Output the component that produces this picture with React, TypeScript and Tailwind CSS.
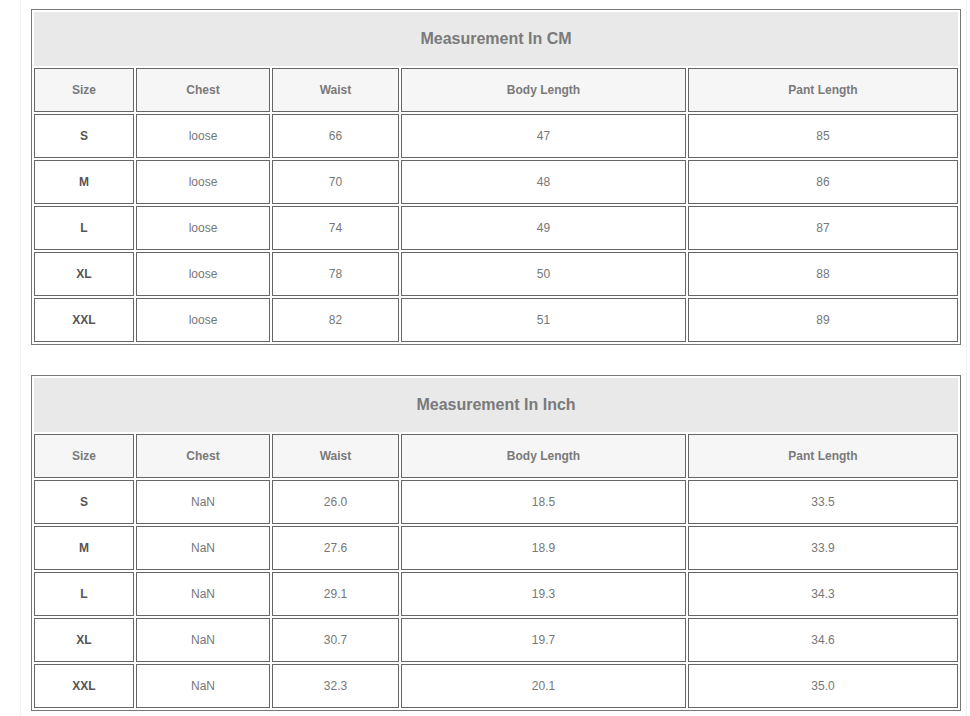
import React from 'react';

// Size chart tables (CM / Inch)

type Row = { size: string; chest: string; waist: string; body: string; pant: string };

const cmRows: Row[] = [
  { size: 'S', chest: 'loose', waist: '66', body: '47', pant: '85' },
  { size: 'M', chest: 'loose', waist: '70', body: '48', pant: '86' },
  { size: 'L', chest: 'loose', waist: '74', body: '49', pant: '87' },
  { size: 'XL', chest: 'loose', waist: '78', body: '50', pant: '88' },
  { size: 'XXL', chest: 'loose', waist: '82', body: '51', pant: '89' },
];

const inchRows: Row[] = [
  { size: 'S', chest: 'NaN', waist: '26.0', body: '18.5', pant: '33.5' },
  { size: 'M', chest: 'NaN', waist: '27.6', body: '18.9', pant: '33.9' },
  { size: 'L', chest: 'NaN', waist: '29.1', body: '19.3', pant: '34.3' },
  { size: 'XL', chest: 'NaN', waist: '30.7', body: '19.7', pant: '34.6' },
  { size: 'XXL', chest: 'NaN', waist: '32.3', body: '20.1', pant: '35.0' },
];

const headers = ['Size', 'Chest', 'Waist', 'Body Length', 'Pant Length'];

const cell = 'h-[44px] border border-[#666] text-center align-middle p-0';

function SizeTable({ title, rows }: { title: string; rows: Row[] }) {
  return (
    <table className="w-[930px] table-fixed border-separate border-spacing-[2px] border border-[#777]">
      <colgroup>
        <col className="w-[100px]" />
        <col className="w-[134px]" />
        <col className="w-[127px]" />
        <col className="w-[285px]" />
        <col />
      </colgroup>
      <tbody>
        <tr>
          <td
            colSpan={5}
            className="h-[54px] bg-[#e9e9e9] text-center align-middle text-[16px] font-bold text-[#7a7a7a]"
          >
            {title}
          </td>
        </tr>
        <tr>
          {headers.map((h) => (
            <td key={h} className={`${cell} bg-[#f6f6f6] text-[12px] font-bold text-[#7a7a7a]`}>
              {h}
            </td>
          ))}
        </tr>
        {rows.map((r) => (
          <tr key={r.size}>
            <td className={`${cell} text-[12px] font-bold text-[#555]`}>{r.size}</td>
            <td className={`${cell} text-[12px] text-[#777]`}>{r.chest}</td>
            <td className={`${cell} text-[12px] text-[#777]`}>{r.waist}</td>
            <td className={`${cell} text-[12px] text-[#777]`}>{r.body}</td>
            <td className={`${cell} text-[12px] text-[#777]`}>{r.pant}</td>
          </tr>
        ))}
      </tbody>
    </table>
  );
}

export default function App() {
  return (
    <div className="min-h-[716px] bg-white font-['Liberation_Sans',Arial,sans-serif]">
      <div className="ml-[20px] w-[947px] min-h-[716px] border-x border-[#f0f0f0] pl-[10px] pt-[9px] flex flex-col gap-[30px]">
        <SizeTable title="Measurement In CM" rows={cmRows} />
        <SizeTable title="Measurement In Inch" rows={inchRows} />
      </div>
    </div>
  );
}
